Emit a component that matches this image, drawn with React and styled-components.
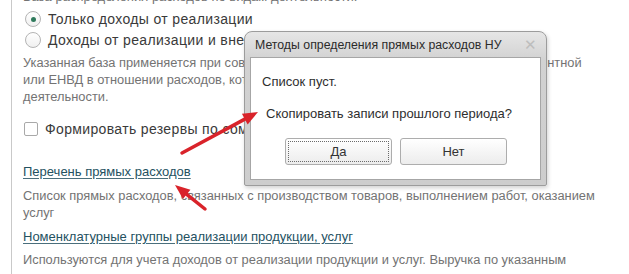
import React from 'react';
import styled, { createGlobalStyle } from 'styled-components';

const COLORS = {
  text: '#3a3a3a',
  muted: '#737373',
  link: '#24515f',
  rule: '#c9c9c9',
};

const GlobalStyle = createGlobalStyle`
  html, body {
    margin: 0;
    padding: 0;
    background: #ffffff;
  }
  body {
    font-family: "Liberation Sans", Arial, sans-serif;
    font-size: 13px;
    overflow: hidden;
  }
`;

const Page = styled.div`
  position: relative;
  width: 629px;
  height: 274px;
  overflow: hidden;
`;

const Form = styled.div`
  margin-left: 11px;
  border-left: 1px solid ${COLORS.rule};
  padding-left: 11px;
  min-height: 100%;
  display: flex;
  flex-direction: column;
  & > * {
    flex-shrink: 0;
  }
`;

const Caption = styled.div`
  color: ${COLORS.muted};
  line-height: 16px;
  margin-top: -11px;
  white-space: nowrap;
`;

const Option = styled.label`
  display: flex;
  align-items: center;
  gap: 7px;
  height: 21px;
  color: ${COLORS.text};
  font-size: 14px;
  letter-spacing: 0.35px;
  white-space: nowrap;
  margin-top: ${(p) => p.$top || 0}px;
`;

const Radio = styled.span`
  width: 16px;
  height: 16px;
  margin-left: 2px;
  border-radius: 50%;
  border: 1px solid #b4b4b4;
  background: linear-gradient(#ffffff, #f0f0f0);
  box-sizing: border-box;
  display: flex;
  align-items: center;
  justify-content: center;
  &::after {
    content: '';
    width: 5px;
    height: 5px;
    border-radius: 50%;
    background: ${(p) => (p.$checked ? '#2f7a5c' : 'transparent')};
  }
`;

const Box = styled.span`
  width: 14px;
  height: 14px;
  border: 1px solid #a9a9a9;
  border-radius: 2px;
  box-sizing: border-box;
  background: #ffffff;
  margin-left: 1px;
`;

const Note = styled.p`
  margin: ${(p) => p.$top || 0}px 0 0;
  color: ${COLORS.muted};
  font-size: 12.85px;
  line-height: 17px;
  white-space: nowrap;
`;

const Link = styled.a`
  display: inline-block;
  align-self: flex-start;
  margin-top: ${(p) => p.$top || 0}px;
  color: ${COLORS.link};
  text-decoration: underline;
  text-underline-offset: 2px;
  text-decoration-color: #4a6f7c;
  line-height: 20px;
  cursor: pointer;
`;

const Dialog = styled.div`
  position: absolute;
  left: 244px;
  top: 31px;
  width: 303px;
  height: 155px;
  box-sizing: border-box;
  border: 1px solid #9c9c9c;
  border-radius: 8px 8px 2px 2px;
  background: linear-gradient(#e6e6e6, #d2d2d2 18%, #cdcdcd);
  padding: 0 5px 5px;
  display: flex;
  flex-direction: column;
  box-shadow: 1px 2px 4px rgba(0, 0, 0, 0.18);
`;

const TitleBar = styled.div`
  height: 25px;
  display: flex;
  align-items: center;
  justify-content: space-between;
  padding: 0 4px 0 5px;
  font-size: 12.3px;
  color: #2b2b2b;
`;

const Close = styled.span`
  font-size: 15px;
  color: #bdbdbd;
  line-height: 1;
`;

const Body = styled.div`
  flex: 1;
  background: #ffffff;
  border: 1px solid #a6a6a6;
  padding: 9px 11px 0;
  display: flex;
  flex-direction: column;
  color: #2e2e2e;
`;

const Message = styled.div`
  line-height: 16px;
  margin: ${(p) => p.$top || 0}px 0 0 ${(p) => p.$indent || 0}px;
`;

const Buttons = styled.div`
  display: flex;
  gap: 8px;
  margin: 16px 0 0 23px;
`;

const Button = styled.button`
  width: 107px;
  height: 27px;
  border: 1px solid #adadad;
  border-radius: 3px;
  background: linear-gradient(#ffffff, #ececec);
  font-family: inherit;
  font-size: 13px;
  color: #333333;
  position: relative;
  padding: 0;
  &::after {
    content: '';
    position: absolute;
    inset: 2px;
    border: 1px dotted ${(p) => (p.$focused ? '#6b6b6b' : 'transparent')};
  }
`;

const Arrows = styled.svg`
  position: absolute;
  left: 0;
  top: 0;
  pointer-events: none;
`;

const Arrow = ({ x1, y1, x2, y2 }) => {
  const ang = Math.atan2(y2 - y1, x2 - x1);
  const len = 15;
  const w = 6;
  const bx = x2 - len * Math.cos(ang);
  const by = y2 - len * Math.sin(ang);
  const px = -Math.sin(ang) * w;
  const py = Math.cos(ang) * w;
  return (
    <g>
      <line x1={x1} y1={y1} x2={bx} y2={by} stroke="#d9232a" strokeWidth="3.5" strokeLinecap="round" />
      <polygon
        points={`${x2},${y2} ${bx + px},${by + py} ${bx - px},${by - py}`}
        fill="#d9232a"
      />
    </g>
  );
};

export default function App() {
  return (
    <Page>
      <GlobalStyle />
      <Form>
        <Caption>База распределения расходов по видам деятельности:</Caption>
        <Option $top={3.5}>
          <Radio $checked />
          Только доходы от реализации
        </Option>
        <Option>
          <Radio />
          Доходы от реализации и внереализационные доходы
        </Option>
        <Note $top={3}>
          Указанная база применяется при совмещении общего режима налогообложения и патентной
          <br />
          или ЕНВД в отношении расходов, которые нельзя отнести к конкретному виду
          <br />
          деятельности.
        </Note>
        <Option $top={14}>
          <Box />
          Формировать резервы по сомнительным долгам
        </Option>
        <Link $top={22.5}>Перечень прямых расходов</Link>
        <Note $top={4.5}>
          Список прямых расходов, связанных с производством товаров, выполнением работ, оказанием
          <br />
          услуг
        </Note>
        <Link $top={6.5}>Номенклатурные группы реализации продукции, услуг</Link>
        <Note $top={3.5}>
          Используются для учета доходов от реализации продукции и услуг. Выручка по указанным
          <br />
          номенклатурным группам отражается в декларации в составе выручки от реализации товаров
        </Note>
      </Form>

      <Dialog>
        <TitleBar>
          Методы определения прямых расходов НУ
          <Close>✕</Close>
        </TitleBar>
        <Body>
          <Message $top={7}>Список пуст.</Message>
          <Message $top={16} $indent={4}>Скопировать записи прошлого периода?</Message>
          <Buttons>
            <Button $focused>Да</Button>
            <Button>Нет</Button>
          </Buttons>
        </Body>
      </Dialog>

      <Arrows width="629" height="274">
        <Arrow x1={182} y1={153} x2={258} y2={112} />
        <Arrow x1={205} y1={209} x2={175} y2={185} />
      </Arrows>
    </Page>
  );
}
